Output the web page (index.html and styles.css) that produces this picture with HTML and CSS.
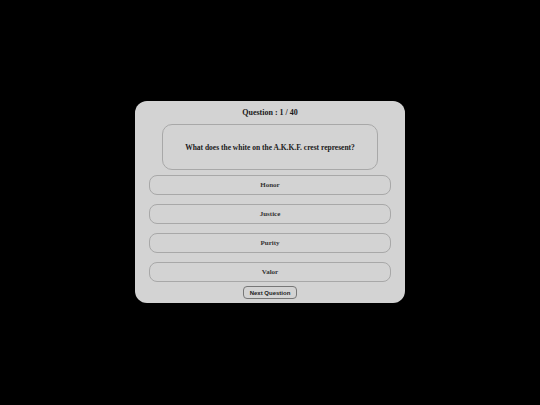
FILE: index.html
```html
<!DOCTYPE html>
<html>
<head>
<meta charset="utf-8">
<link rel="stylesheet" href="styles.css">
</head>
<body>
<div class="stage">
  <div class="card">
    <div class="title">Question : 1 / 40</div>
    <div class="question">What does the white on the A.K.K.F. crest represent?</div>
    <div class="options">
      <div class="option">Honor</div>
      <div class="option">Justice</div>
      <div class="option">Purity</div>
      <div class="option">Valor</div>
    </div>
    <button class="next">Next Question</button>
  </div>
</div>
</body>
</html>
```
FILE: styles.css
```css
html, body {
  margin: 0;
  padding: 0;
  background: #000;
  width: 540px;
  height: 405px;
}
.stage {
  width: 540px;
  height: 405px;
  box-sizing: border-box;
  padding-top: 101px;
  display: flex;
  align-items: flex-start;
  justify-content: center;
}
.card {
  width: 270px;
  height: 202px;
  box-sizing: border-box;
  background: #d3d3d3;
  border-radius: 12px;
  padding: 6px 14px 4px;
  display: flex;
  flex-direction: column;
  align-items: center;
  font-family: "Liberation Serif", serif;
  color: #1a1a1a;
}
.title {
  height: 12px;
  line-height: 12px;
  font-size: 8px;
  font-weight: bold;
  margin-bottom: 5px;
}
.question {
  width: 216px;
  height: 46px;
  box-sizing: border-box;
  border: 1px solid #a8a8a8;
  border-radius: 10px;
  display: flex;
  align-items: center;
  justify-content: center;
  font-size: 7.5px;
  font-weight: bold;
}
.options {
  margin-top: 5px;
  width: 242px;
  display: flex;
  flex-direction: column;
  gap: 9px;
}
.option {
  height: 20px;
  box-sizing: border-box;
  border: 1px solid #a8a8a8;
  border-radius: 8px;
  display: flex;
  align-items: center;
  justify-content: center;
  font-size: 7px;
  font-weight: bold;
  color: #333;
}
.next {
  margin-top: 4px;
  width: 54px;
  height: 13px;
  box-sizing: border-box;
  padding: 0;
  background: #d3d3d3;
  border: 1px solid #777;
  border-radius: 4px;
  font-family: "Liberation Sans", Arial, sans-serif;
  font-size: 6px;
  font-weight: 600;
  color: #222;
}
```
